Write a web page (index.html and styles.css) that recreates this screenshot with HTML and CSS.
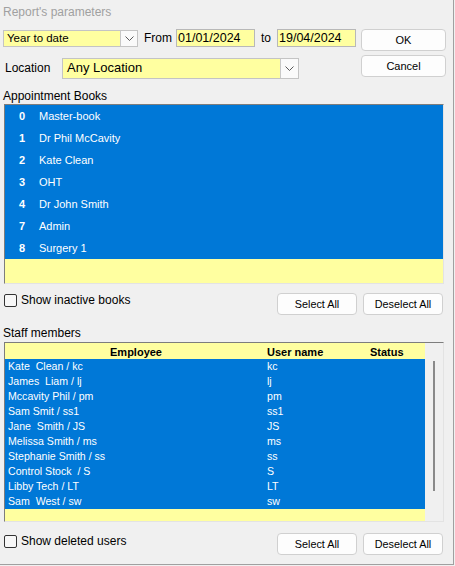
FILE: index.html
```html
<!DOCTYPE html>
<html>
<head>
<meta charset="utf-8">
<title>Report's parameters</title>
<link rel="stylesheet" href="styles.css">
</head>
<body>
<div class="win">
  <div class="title">Report's parameters</div>

  <div class="row1">
    <div class="combo combo-period">
      <span class="combo-text">Year to date</span>
      <span class="drop"><svg width="9" height="5" viewBox="0 0 9 5"><polyline points="0.5,0.5 4.5,4.5 8.5,0.5" fill="none" stroke="#5a5a5a" stroke-width="1"/></svg></span>
    </div>
    <span class="lbl lbl-from">From</span>
    <div class="field">01/01/2024</div>
    <span class="lbl lbl-to">to</span>
    <div class="field">19/04/2024</div>
    <button class="btn btn-top">OK</button>
  </div>

  <div class="row2">
    <span class="lbl lbl-loc">Location</span>
    <div class="combo combo-loc">
      <span class="combo-text">Any Location</span>
      <span class="drop"><svg width="9" height="5" viewBox="0 0 9 5"><polyline points="0.5,0.5 4.5,4.5 8.5,0.5" fill="none" stroke="#5a5a5a" stroke-width="1"/></svg></span>
    </div>
    <button class="btn btn-top btn-cancel">Cancel</button>
  </div>

  <div class="section-label">Appointment Books</div>
  <div class="listbox">
    <div class="book"><span class="num">0</span><span class="name">Master-book</span></div>
    <div class="book"><span class="num">1</span><span class="name">Dr Phil McCavity</span></div>
    <div class="book"><span class="num">2</span><span class="name">Kate Clean</span></div>
    <div class="book"><span class="num">3</span><span class="name">OHT</span></div>
    <div class="book"><span class="num">4</span><span class="name">Dr John Smith</span></div>
    <div class="book"><span class="num">7</span><span class="name">Admin</span></div>
    <div class="book"><span class="num">8</span><span class="name">Surgery 1</span></div>
  </div>

  <div class="opts">
    <label class="chk"><span class="box"></span><span class="chk-text">Show inactive books</span></label>
    <div class="btns">
      <button class="btn btn-sm">Select All</button>
      <button class="btn btn-sm">Deselect All</button>
    </div>
  </div>

  <div class="section-label section-staff">Staff members</div>
  <div class="listbox staff">
    <div class="grid-area">
      <div class="hdr"><span class="c1">Employee</span><span class="c2">User name</span><span class="c3">Status</span></div>
      <div class="srow"><span class="c1">Kate&nbsp; Clean / kc</span><span class="c2">kc</span><span class="c3"></span></div>
      <div class="srow"><span class="c1">James&nbsp; Liam / lj</span><span class="c2">lj</span><span class="c3"></span></div>
      <div class="srow"><span class="c1">Mccavity Phil / pm</span><span class="c2">pm</span><span class="c3"></span></div>
      <div class="srow"><span class="c1">Sam Smit / ss1</span><span class="c2">ss1</span><span class="c3"></span></div>
      <div class="srow"><span class="c1">Jane&nbsp; Smith / JS</span><span class="c2">JS</span><span class="c3"></span></div>
      <div class="srow"><span class="c1">Melissa Smith / ms</span><span class="c2">ms</span><span class="c3"></span></div>
      <div class="srow"><span class="c1">Stephanie Smith / ss</span><span class="c2">ss</span><span class="c3"></span></div>
      <div class="srow"><span class="c1">Control Stock&nbsp; / S</span><span class="c2">S</span><span class="c3"></span></div>
      <div class="srow"><span class="c1">Libby Tech / LT</span><span class="c2">LT</span><span class="c3"></span></div>
      <div class="srow"><span class="c1">Sam&nbsp; West / sw</span><span class="c2">sw</span><span class="c3"></span></div>
    </div>
    <div class="vscroll"><div class="thumb"></div></div>
  </div>

  <div class="opts opts-staff">
    <label class="chk"><span class="box"></span><span class="chk-text">Show deleted users</span></label>
    <div class="btns">
      <button class="btn btn-sm">Select All</button>
      <button class="btn btn-sm">Deselect All</button>
    </div>
  </div>
</div>
</body>
</html>
```

FILE: styles.css
```css
html, body {
  margin: 0;
  padding: 0;
  background: #f0f0f0;
}

.win {
  width: 454px;
  height: 565px;
  box-sizing: border-box;
  border-right: 1px solid #a0a0a0;
  border-bottom: 1px solid #a0a0a0;
  background: #f0f0f0;
  font-family: "Liberation Sans", Arial, sans-serif;
  color: #000;
  overflow: hidden;
}

.title {
  height: 24px;
  line-height: 24px;
  padding-left: 3px;
  font-size: 12px;
  color: #a0a0a0;
}

/* ---------- top rows ---------- */
.row1 {
  display: flex;
  align-items: flex-start;
  height: 22px;
  margin-top: 5px;
  padding-left: 3px;
}

.row2 {
  display: flex;
  align-items: flex-start;
  height: 24px;
  margin-top: 4px;
  padding-left: 3px;
}

.combo {
  display: flex;
  align-items: stretch;
  box-sizing: border-box;
  background: #ffffa0;
  border: 1px solid #c4c4c4;
}

.combo-text {
  flex: 1;
  white-space: nowrap;
  overflow: hidden;
}

.drop {
  display: flex;
  align-items: center;
  justify-content: center;
  box-sizing: border-box;
  background: #fafafa;
  border-left: 1px solid #c8c8c8;
}

.combo-period {
  width: 135px;
  height: 17px;
  margin-top: 1px;
}

.combo-period .combo-text {
  font-size: 11.5px;
  line-height: 15px;
  padding-left: 3px;
}

.combo-period .drop {
  width: 17px;
}

.combo-loc {
  width: 237px;
  height: 21px;
  margin-top: 3px;
}

.combo-loc .combo-text {
  font-size: 13px;
  line-height: 18px;
  padding-left: 4px;
}

.combo-loc .drop {
  width: 18px;
}

.lbl {
  font-size: 12px;
  white-space: nowrap;
}

.lbl-from {
  width: 32px;
  margin-left: 6px;
  line-height: 18px;
}

.lbl-to {
  width: 16px;
  margin-left: 6px;
  line-height: 18px;
}

.lbl-loc {
  width: 57px;
  margin-left: 2px;
  line-height: 27px;
}

.field {
  width: 79px;
  height: 18px;
  box-sizing: border-box;
  background: #ffffa0;
  border: 1px solid #b8b8b8;
  font-size: 12.5px;
  line-height: 16px;
  padding-left: 1px;
  white-space: nowrap;
}

.btn {
  box-sizing: border-box;
  background: #fdfdfd;
  border: 1px solid #d0d0d0;
  border-radius: 4px;
  font-family: "Liberation Sans", Arial, sans-serif;
  font-size: 11px;
  color: #000;
  padding: 0;
}

.btn-top {
  width: 85px;
  height: 22px;
  margin-left: auto;
  margin-right: 7px;
}

/* ---------- section labels ---------- */
.section-label {
  height: 25px;
  display: flex;
  align-items: flex-end;
  padding-left: 3px;
  font-size: 12px;
  line-height: 16px;
}

.section-staff {
  height: 27px;
  line-height: 18px;
}

/* ---------- list boxes ---------- */
.listbox {
  width: 440px;
  height: 180px;
  margin-left: 4px;
  box-sizing: border-box;
  border: 1px solid;
  border-color: #7d7d7d #e3e3e3 #e3e3e3 #7d7d7d;
  background: #ffffa0;
  overflow: hidden;
}

.book {
  display: flex;
  height: 22px;
  line-height: 22px;
  background: #0078d7;
  color: #fff;
  font-size: 11px;
}

.num {
  width: 20px;
  padding-left: 14px;
  font-weight: bold;
}

.name {
  white-space: nowrap;
}

/* ---------- option rows ---------- */
.opts {
  display: flex;
  align-items: flex-start;
  height: 22px;
  margin-top: 9px;
}

.opts-staff {
  margin-top: 11px;
}

.chk {
  display: flex;
  align-items: center;
  height: 14px;
  margin-left: 4px;
  font-size: 12px;
}

.opts-staff .chk {
  margin-top: 1px;
}

.box {
  width: 13px;
  height: 13px;
  box-sizing: border-box;
  border: 1px solid #333;
  border-radius: 2px;
  background: #f7f7f7;
}

.chk-text {
  margin-left: 4px;
  white-space: nowrap;
}

.btns {
  display: flex;
  gap: 6px;
  margin-left: auto;
  margin-right: 10px;
}

.btn-sm {
  width: 80px;
  height: 22px;
  font-size: 10.8px;
}

/* ---------- staff grid ---------- */
.staff {
  display: flex;
  background: #f0f0f0;
}

.grid-area {
  width: 420px;
  background: #ffffa0;
}

.hdr, .srow {
  display: flex;
  white-space: nowrap;
}

.hdr {
  height: 16px;
  line-height: 18px;
  font-size: 11px;
  font-weight: bold;
}

.hdr .c1 {
  width: 262px;
  text-align: center;
}

.hdr .c2 {
  width: 100px;
}

.hdr .c3 {
  padding-left: 3px;
}

.srow {
  height: 15px;
  line-height: 15px;
  background: #0078d7;
  color: #fff;
  font-size: 10.6px;
}

.srow .c1 {
  width: 259px;
  padding-left: 3px;
}

.srow .c2 {
  width: 100px;
}

.vscroll {
  width: 18px;
  background: #f0f0f0;
}

.thumb {
  width: 2px;
  height: 130px;
  margin-top: 18px;
  margin-left: 8px;
  background: #8a8a8a;
}
```
